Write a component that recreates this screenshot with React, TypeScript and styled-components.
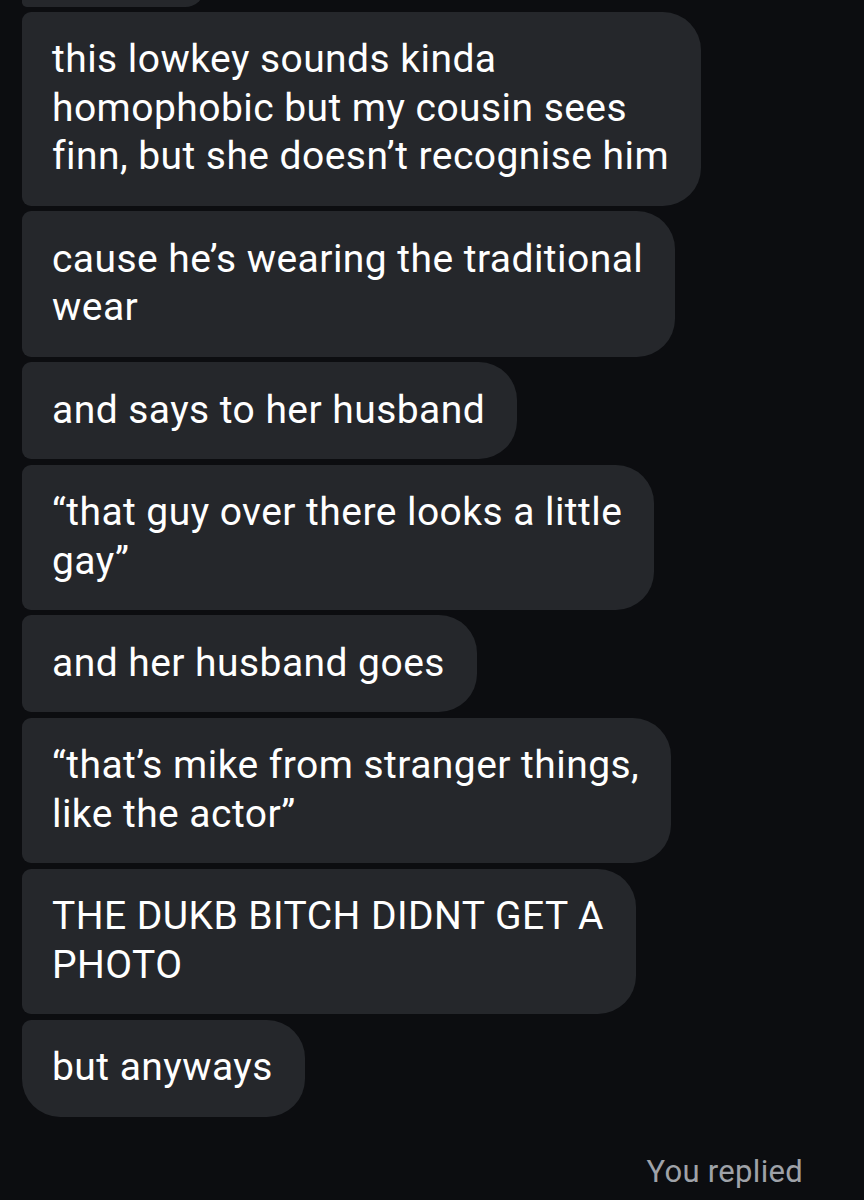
import React from "react";
import styled, { createGlobalStyle } from "styled-components";

const Global = createGlobalStyle`
  html, body { margin: 0; padding: 0; background: #0c0d10; }
  body { width: 864px; height: 1200px; overflow: hidden; }
`;

const Screen = styled.div`
  width: 864px;
  height: 1200px;
  overflow: hidden;
  background: #0c0d10;
  font-family: Roboto, "Liberation Sans", sans-serif;
  display: flex;
  flex-direction: column;
`;

const Thread = styled.div`
  display: flex;
  flex-direction: column;
  align-items: flex-start;
  gap: 5.4px;
  padding-left: 22px;
`;

const Bubble = styled.div<{ $first?: boolean; $last?: boolean }>`
  background: #25272b;
  color: #ffffff;
  font-size: 39px;
  letter-spacing: 0.45px;
  line-height: 48.5px;
  padding: 23.5px 32px 25px 30px;
  white-space: pre-line;
  border-radius: ${(p) => (p.$first ? "38px" : "9px")} 38px 38px
    ${(p) => (p.$last ? "38px" : "9px")};
`;

const Stub = styled.div`
  width: 183px;
  height: 40px;
  margin-top: -33.5px;
  background: #25272b;
  border-radius: 9px 38px 38px 9px;
`;

const Footer = styled.div`
  display: flex;
  justify-content: flex-end;
  padding: 37px 61px 0 0;
  color: #9fa2a8;
  font-size: 31px;
  letter-spacing: 0.3px;
  line-height: 36px;
`;

const messages = [
  "this lowkey sounds kinda\nhomophobic but my cousin sees\nfinn, but she doesn\u2019t recognise him",
  "cause he\u2019s wearing the traditional\nwear",
  "and says to her husband",
  "\u201cthat guy over there looks a little\ngay\u201d",
  "and her husband goes",
  "\u201cthat\u2019s mike from stranger things,\nlike the actor\u201d",
  "THE DUKB BITCH DIDNT GET A\nPHOTO",
  "but anyways",
];

export default function App() {
  return (
    <Screen>
      <Global />
      <Thread>
        <Stub />
        {messages.map((m, i) => (
          <Bubble key={i} $last={i === messages.length - 1}>
            {m}
          </Bubble>
        ))}
      </Thread>
      <Footer>You replied</Footer>
    </Screen>
  );
}
